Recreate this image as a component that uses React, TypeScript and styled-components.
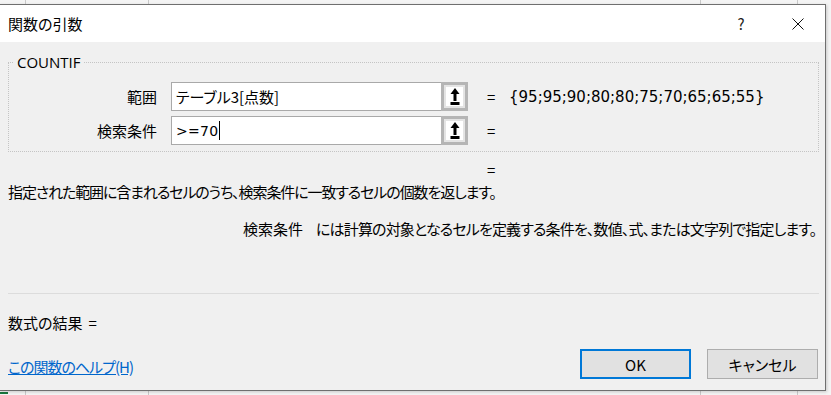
import React from "react";
import styled, { createGlobalStyle } from "styled-components";

const Global = createGlobalStyle`
  html, body { margin: 0; padding: 0; }
  body {
    width: 831px; height: 395px; overflow: hidden;
    font-family: "Noto Sans CJK JP", "Noto Sans", sans-serif;
    font-feature-settings: "palt";
    color: #000;
  }
`;

const Sheet = styled.div`
  width: 831px;
  height: 395px;
  box-sizing: border-box;
  padding-top: 4px;
  overflow: hidden;
  background-color: #f4f4f4;
  background-image:
    linear-gradient(#19793f, #19793f),
    linear-gradient(#c9c9c9, #c9c9c9),
    linear-gradient(#c9c9c9, #c9c9c9),
    linear-gradient(#c9c9c9, #c9c9c9),
    linear-gradient(#c9c9c9, #c9c9c9);
  background-size: 8px 2px, 1px 100%, 1px 100%, 1px 100%, 1px 100%;
  background-position: 0 392px, 25px 0, 148px 0, 700px 0, 797px 0;
  background-repeat: no-repeat;
`;

const Dialog = styled.div`
  width: 827px;
  margin-left: -1px;
  box-sizing: border-box;
  border: 1px solid #6f6f6f;
  background: #f0f0f0;
  box-shadow: 1px 1px 3px rgba(0, 0, 0, 0.18);
  display: flex;
  flex-direction: column;
`;

const TitleBar = styled.div`
  height: 37px;
  background: #fff;
  display: flex;
  align-items: center;
  padding-left: 8px;
  font-size: 15px;
`;

const Title = styled.span`
  flex: 1;
  line-height: 20px;
`;

const TitleButton = styled.span<{ $w: number }>`
  width: ${(p) => p.$w}px;
  height: 37px;
  display: flex;
  align-items: center;
  justify-content: center;
  font-size: 15px;
  color: #222;
`;

const Body = styled.div`
  padding: 0 6px 11px 8px;
  display: flex;
  flex-direction: column;
  font-size: 15px;
`;

const Group = styled.fieldset`
  margin: 10px 0 0;
  padding: 10px 0 6px;
  border: 1px dotted #c4c4c4;
  min-width: 0;
  display: flex;
  flex-direction: column;
  gap: 5px;
`;

const Legend = styled.legend`
  margin-left: 5px;
  padding: 0 3px;
  font-family: "Open Sans", "Noto Sans CJK JP", sans-serif;
  font-size: 15px;
  line-height: 20px;
`;

const ArgRow = styled.div`
  display: grid;
  grid-template-columns: 148px 311px 41px 1fr;
  align-items: center;
  height: 29px;
`;

const ArgLabel = styled.label`
  text-align: right;
  line-height: 20px;
`;

const Field = styled.div`
  display: flex;
  height: 29px;
  box-sizing: border-box;
  margin-left: 14px;
`;

const TextBox = styled.div`
  flex: 1;
  background: #fff;
  border: 1px solid #a9a9a9;
  border-right: none;
  display: flex;
  align-items: center;
  padding-left: 4px;
  line-height: 20px;
  font-size: 15px;
`;

const Latin = styled.span`
  font-family: "DejaVu Sans", sans-serif;
  font-size: 14px;
  letter-spacing: 0.3px;
`;

const Caret = styled.span`
  display: inline-block;
  width: 0;
  height: 19px;
  border-left: 1px solid #000;
  margin-left: 1px;
`;

const RefButton = styled.div`
  width: 27px;
  height: 29px;
  box-sizing: border-box;
  border: 3px solid #b5b5b5;
  background: #fff;
  box-shadow: inset 0 0 0 2px #e4e4e4;
  display: flex;
  align-items: center;
  justify-content: center;
`;

const Eq = styled.span`
  padding-left: 19px;
  line-height: 20px;
`;

const Value = styled.span`
  line-height: 20px;
  font-family: "DejaVu Sans", sans-serif;
  font-size: 15px;
  white-space: nowrap;
`;

const ResultEq = styled.div`
  margin-top: 8px;
  line-height: 20px;
  padding-left: 479px;
`;

const Desc = styled.div`
  line-height: 24px;
  letter-spacing: -1.1px;
  white-space: nowrap;
`;

const ArgDesc = styled.div`
  margin-top: 13px;
  line-height: 24px;
  padding-left: 235px;
  display: flex;
  white-space: nowrap;
`;

const ArgDescName = styled.span`
  width: 73px;
`;

const ArgDescText = styled.span`
  letter-spacing: -0.85px;
`;

const Separator = styled.div`
  margin-top: 52px;
  border-top: 1px solid #dcdcdc;
`;

const Result = styled.div`
  margin-top: 19px;
  line-height: 20px;
`;

const ResultEqSign = styled.span`
  margin-left: 6px;
`;

const Footer = styled.div`
  margin-top: 16px;
  display: flex;
  align-items: center;
  height: 30px;
`;

const HelpLink = styled.a`
  flex: 1;
  color: #0066cc;
  text-decoration: underline;
  line-height: 20px;
  padding-top: 6px;
  letter-spacing: -1px;
  cursor: pointer;
`;

const DlgButton = styled.button<{ $default?: boolean }>`
  width: 111px;
  height: 30px;
  box-sizing: border-box;
  margin-left: ${(p) => (p.$default ? 0 : 16)}px;
  margin-right: ${(p) => (p.$default ? 0 : 1)}px;
  background: #e1e1e1;
  border: ${(p) => (p.$default ? "2px solid #0078d7" : "1px solid #adadad")};
  font-family: inherit;
  font-feature-settings: "palt";
  font-size: 15px;
  color: #000;
  padding: 0;
`;

const UploadIcon = () => (
  <svg width="10" height="17" viewBox="0 0 10 17">
    <polygon points="5,0 9.5,6 0.5,6" fill="#000" />
    <rect x="3.5" y="5" width="3" height="8" fill="#000" />
    <rect x="0.5" y="14" width="9" height="3" fill="#000" />
  </svg>
);

const CloseIcon = () => (
  <svg width="12" height="12" viewBox="0 0 12 12">
    <path d="M0.5 0.5 L11.5 11.5 M11.5 0.5 L0.5 11.5" stroke="#111" strokeWidth="1" />
  </svg>
);

export default function App() {
  return (
    <>
      <Global />
      <Sheet>
        <Dialog>
          <TitleBar>
            <Title>関数の引数</Title>
            <TitleButton $w={60}>?</TitleButton>
            <TitleButton $w={54}>
              <CloseIcon />
            </TitleButton>
          </TitleBar>
          <Body>
            <Group>
              <Legend>COUNTIF</Legend>
              <ArgRow>
                <ArgLabel>範囲</ArgLabel>
                <Field>
                  <TextBox>テーブル3[点数]</TextBox>
                  <RefButton>
                    <UploadIcon />
                  </RefButton>
                </Field>
                <Eq>=</Eq>
                <Value>{"{95;95;90;80;80;75;70;65;65;55}"}</Value>
              </ArgRow>
              <ArgRow>
                <ArgLabel>検索条件</ArgLabel>
                <Field>
                  <TextBox>
                    <Latin>&gt;=70</Latin>
                    <Caret />
                  </TextBox>
                  <RefButton>
                    <UploadIcon />
                  </RefButton>
                </Field>
                <Eq>=</Eq>
                <Value />
              </ArgRow>
            </Group>
            <ResultEq>=</ResultEq>
            <Desc>指定された範囲に含まれるセルのうち、検索条件に一致するセルの個数を返します。</Desc>
            <ArgDesc>
              <ArgDescName>検索条件</ArgDescName>
              <ArgDescText>には計算の対象となるセルを定義する条件を、数値、式、または文字列で指定します。</ArgDescText>
            </ArgDesc>
            <Separator />
            <Result>
              数式の結果<ResultEqSign>=</ResultEqSign>
            </Result>
            <Footer>
              <HelpLink>この関数のヘルプ(H)</HelpLink>
              <DlgButton $default>OK</DlgButton>
              <DlgButton>キャンセル</DlgButton>
            </Footer>
          </Body>
        </Dialog>
      </Sheet>
    </>
  );
}
